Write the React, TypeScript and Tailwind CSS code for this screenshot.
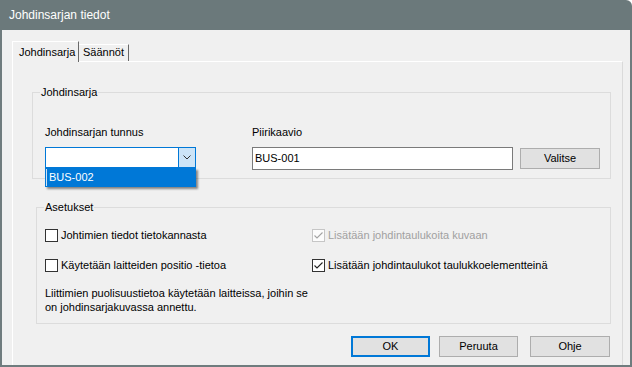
import React from "react";

function Check({ disabled }: { disabled?: boolean }) {
  return (
    <svg width="11" height="11" viewBox="0 0 11 11" className="block">
      <polyline
        points="1.5,5.5 4,8 9.5,2.5"
        fill="none"
        stroke={disabled ? "#a3a3a3" : "#222"}
        strokeWidth="1.1"
      />
    </svg>
  );
}

function CheckBox({
  label,
  checked,
  disabled,
}: {
  label: string;
  checked?: boolean;
  disabled?: boolean;
}) {
  return (
    <div className="flex items-center gap-[3px] h-[13px]">
      <div
        className={
          "w-[13px] h-[13px] border flex items-center justify-center " +
          (disabled ? "border-[#c6c6c6] bg-[#fcfcfc]" : "border-[#333333] bg-white")
        }
      >
        {checked && <Check disabled={disabled} />}
      </div>
      <span className={disabled ? "text-[#a0a0a0]" : "text-black"}>{label}</span>
    </div>
  );
}

function Group({
  title,
  className,
  children,
}: {
  title: string;
  className: string;
  children: React.ReactNode;
}) {
  return (
    <div className={"relative border border-[#dcdcdc] " + className}>
      <span className="absolute left-[7px] top-[-7px] px-[1px] bg-[#f0f0f0] leading-[13px]">
        {title}
      </span>
      {children}
    </div>
  );
}

function Button({ label, def, className }: { label: string; def?: boolean; className: string }) {
  return (
    <div
      className={
        "h-[21px] flex items-center justify-center bg-[#e1e1e1] " +
        (def ? "border-2 border-[#0078d7] " : "border border-[#adadad] ") +
        className
      }
    >
      {label}
    </div>
  );
}

export default function App() {
  return (
    <div className="w-[632px] h-[367px] overflow-hidden bg-white font-['Liberation_Sans',Arial,sans-serif] text-[11px] leading-[13px] text-black">
      <div className="w-[632px] h-[367px] flex flex-col rounded-tr-[6px] overflow-hidden">
        <div className="h-[30px] shrink-0 bg-[#6b797b] flex items-center pl-[9px] text-white text-[12px]">
          Johdinsarjan tiedot
        </div>
        <div className="flex-1 flex flex-col bg-[#f0f0f0] border-l-2 border-r-2 border-b-2 border-[#6f7c7e]">
          <div className="flex items-end pl-[10px] pt-[11px]">
            <div className="relative z-10 -mb-px h-[21px] w-[67px] bg-[#f0f0f0] border-l border-t border-white border-r border-r-[#696969] pl-[6px] pt-[4px]">
              Johdinsarja
            </div>
            <div className="h-[17px] w-[50px] border-t border-white border-r border-r-[#696969] pl-[4px] pt-px">
              Säännöt
            </div>
          </div>
          <div className="flex-1 w-[611px] ml-[10px] border-l border-t border-white border-r border-r-[#dadada] flex flex-col">
            <Group title="Johdinsarja" className="ml-[19px] mt-[30px] w-[579px] h-[87px]">
              <div className="flex pl-[12px] pt-[33px]">
                <div className="w-[151px] flex flex-col">
                  <div className="h-[13px]">Johdinsarjan tunnus</div>
                  <div className="relative mt-[8px] h-[21px] border border-[#0078d7] bg-white flex justify-end">
                    <div className="w-[17px] h-full bg-[#cce4f7] border-l border-[#0078d7] flex items-center justify-center">
                      <svg width="8" height="5" viewBox="0 0 8 5">
                        <polyline points="0.5,0.5 4,4 7.5,0.5" fill="none" stroke="#333" strokeWidth="1" />
                      </svg>
                    </div>
                    <div className="absolute left-[-1px] top-[20px] w-[151px] h-[19px] bg-[#0078d7] text-white flex items-center pl-[4px] shadow-[2px_2px_2px_rgba(0,0,0,0.45)]">
                      <div className="absolute left-[1px] top-[1px] bottom-[1px] w-px bg-[#cfe3f5]" />
                      BUS-002
                    </div>
                  </div>
                </div>
                <div className="ml-[56px] flex flex-col">
                  <div className="h-[13px]">Piirikaavio</div>
                  <div className="mt-[8px] flex items-start">
                    <div className="w-[261px] h-[23px] border border-[#7a7a7a] bg-white flex items-center pl-[2px]">
                      BUS-001
                    </div>
                    <Button label="Valitse" className="ml-[7px] mt-px w-[80px] h-[21px]" />
                  </div>
                </div>
              </div>
            </Group>
            <Group title="Asetukset" className="ml-[23px] mt-[28px] w-[575px] h-[117px]">
              <div className="flex pl-[8px] pt-[21px]">
                <div className="w-[267px] flex flex-col">
                  <CheckBox label="Johtimien tiedot tietokannasta" />
                  <div className="mt-[17px]">
                    <CheckBox label="Käytetään laitteiden positio -tietoa" />
                  </div>
                  <p className="mt-[14px] leading-[14px]">
                    Liittimien puolisuustietoa käytetään laitteissa, joihin se
                    <br />
                    on johdinsarjakuvassa annettu.
                  </p>
                </div>
                <div className="flex flex-col">
                  <CheckBox label="Lisätään johdintaulukoita kuvaan" checked disabled />
                  <div className="mt-[17px]">
                    <CheckBox label="Lisätään johdintaulukot taulukkoelementteinä" checked />
                  </div>
                </div>
              </div>
            </Group>
            <div className="flex justify-end pr-[12px] mt-[12px]">
              <Button label="OK" def className="w-[79px]" />
              <Button label="Peruuta" className="ml-[9px] w-[79px]" />
              <Button label="Ohje" className="ml-[12px] w-[80px]" />
            </div>
          </div>
        </div>
      </div>
    </div>
  );
}
